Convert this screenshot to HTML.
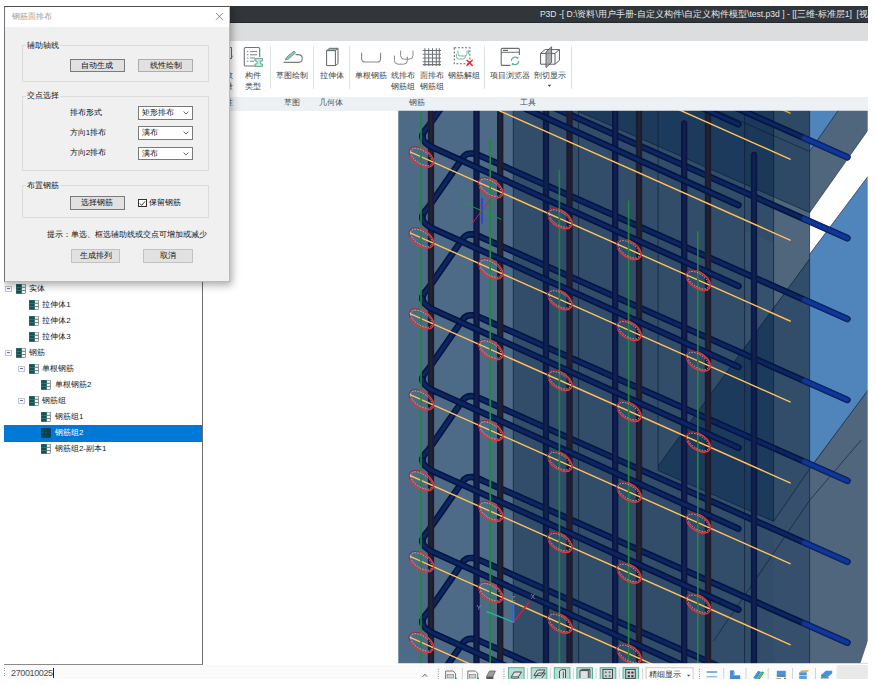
<!DOCTYPE html>
<html lang="zh">
<head>
<meta charset="utf-8">
<title>P3D</title>
<style>
*{box-sizing:border-box;margin:0;padding:0}
html,body{width:876px;height:685px;overflow:hidden;background:#fff}
body{position:relative;font-family:"Liberation Sans",sans-serif;font-size:8px;color:#1a1a1a;line-height:1}
.abs{position:absolute}
#titlebar{left:4px;top:6px;width:864px;height:16.7px;background:#31363a;border-bottom:1px solid #23282c}
#titletext{right:8px;top:10px;color:#e4e6e8;font-size:8.55px;white-space:nowrap;letter-spacing:0}
#tabband{left:4px;top:22.7px;width:864px;height:18px;background:#dcddde}
#ribbon{left:4px;top:40.5px;width:864px;height:56px;background:#fff}
#strip{left:4px;top:96.5px;width:864px;height:14.3px;background:#eef1f3}
.rl{position:absolute;color:#3d454d;font-size:8px;white-space:nowrap;transform:translateX(-50%);text-align:center;line-height:11.4px}
.sl{position:absolute;top:99px;color:#4a535c;font-size:8px;white-space:nowrap;transform:translateX(-50%)}
.sep{position:absolute;top:46px;width:1px;height:43px;background:#dfe2e5}
/* tree */
#tree{left:4px;top:110px;width:199px;height:554.5px;background:#fff;border-right:1.5px solid #6e6e6e;border-bottom:1.5px solid #8a8a8a}
.tr{position:absolute;font-size:8px;color:#1c1c1c;white-space:nowrap;height:16px;line-height:16px}
.ti{position:absolute;width:10px;height:10px}
.ex{position:absolute;width:5px;height:5px;border:0.7px solid #c2c6cc;background:#fbfcff}
.ex:after{content:"";position:absolute;left:0.8px;right:0.8px;top:1.6px;height:0.7px;background:#5a6fb0}
#sel{left:4px;top:425px;width:198px;height:16.5px;background:#0078d7}
/* status */
#status{left:4px;top:664.5px;width:864px;height:21px;background:#fbfbfb}
/* dialog */
#dlg{left:0;top:0;width:225.5px;height:276.3px;background:#f0f0f0;border:1px solid #b9b9b9;border-left-color:#6f7276;border-top-color:#4b4e52;box-shadow:1px 2px 8px 1px rgba(0,0,0,.34)}
#dlgtitle{left:0;top:0;width:100%;height:19.6px;background:#fff}
.grp{position:absolute;border:1px solid #dcdcdc;background:transparent}
.gl{position:absolute;font-size:8px;color:#111;background:#f0f0f0;padding:0 1px;white-space:nowrap}
.btn{position:absolute;height:13.6px;border:1px solid #adadad;background:#e1e1e1;font-size:8px;color:#111;text-align:center;line-height:11.6px;white-space:nowrap}
.btn.def{border-color:#7a7a7a}
.cmb{position:absolute;width:55px;height:13.7px;border:1px solid #7a7a7a;background:#fff;font-size:8px;line-height:11.7px;padding-left:2.4px;white-space:nowrap}
.cmb svg{position:absolute;right:3px;top:4px}
.lbl{position:absolute;font-size:8px;color:#111;white-space:nowrap}
</style>
</head>
<body>
<!-- main window chrome -->
<div id="titlebar" class="abs"></div>
<div id="titletext" class="abs">P3D -[ D:\资料\用户手册-自定义构件\自定义构件模型\test.p3d ] - [[三维-标准层1]&nbsp; [视</div>
<div id="tabband" class="abs"></div>
<div id="ribbon" class="abs"></div>
<div id="strip" class="abs"></div>
<!-- ribbon items -->
<div class="rl" style="left:229.4px;top:70px">数<br>量</div>
<svg class="abs" style="left:226px;top:46px" width="8" height="22" viewBox="0 0 8 22"><path d="M1.5,1.5 h4 v11 h-4 M5.5,9 q2,1.5 -1,4" fill="none" stroke="#6b6f73" stroke-width="1"/></svg>
<svg class="abs" style="left:243px;top:46px" width="22" height="22" viewBox="0 0 22 22"><path d="M13.6,20 H2.6 Q1.3,20 1.3,18.7 V2.8 Q1.3,1.5 2.6,1.5 H15.4 Q16.7,1.5 16.7,2.8 V11" fill="none" stroke="#707478" stroke-width="1.1"/><g stroke="#7d8185" stroke-width="1"><path d="M4,5.6h1.4M7,5.6h7M4,8.8h1.4M7,8.8h7M4,12h1.4M7,12h5M4,15.2h1.4M7,15.2h4"/></g><path d="M12,12.6 h7.4 v2.4 h-1.7 q-1,1.5 0,3 h1.7 v2.4 h-7.4 v-2.4 h1.7 q1,-1.5 0,-3 h-1.7 z" fill="#cfe9df" stroke="#57a98a" stroke-width="1"/></svg>
<div class="rl" style="left:253.3px;top:70px">构件<br>类型</div>
<div class="sep" style="left:270.3px"></div>
<svg class="abs" style="left:281px;top:46px" width="24" height="20" viewBox="0 0 24 20"><path d="M3,16.4 H17.5 Q21.3,16.2 21.3,12.2 Q21,8.6 17,8.6 H15" fill="none" stroke="#777b7f" stroke-width="1.1" stroke-linecap="round"/><path d="M4.4,14 L5.3,11.6 L13,5 L14.6,6.8 L6.9,13.3 Z" fill="#8cc7ae" stroke="#4f9f80" stroke-width=".9" stroke-linejoin="round"/></svg>
<div class="rl" style="left:292.4px;top:70px">草图绘制</div>
<div class="sep" style="left:312.8px"></div>
<svg class="abs" style="left:323px;top:46px" width="18" height="22" viewBox="0 0 18 22"><path d="M3.6,4.6 L6.4,2.3 H15 L12.4,4.6 Z" fill="#86c5ab" stroke="#5f6468" stroke-width=".9" stroke-linejoin="round"/><path d="M3.6,4.6 H12.4 V19.6 H3.6 Z M12.4,4.6 L15,2.3 V17.6 L12.4,19.6" fill="#fff" stroke="#5f6468" stroke-width="1" stroke-linejoin="round"/></svg>
<div class="rl" style="left:332.1px;top:70px">拉伸体</div>
<div class="sep" style="left:349px"></div>
<svg class="abs" style="left:359px;top:46px" width="24" height="20" viewBox="0 0 24 20"><path d="M2.6,7 V12.4 Q2.6,16 6.2,16 H18 Q21.6,16 21.6,12.4 V7" fill="none" stroke="#85898d" stroke-width="1.1" stroke-linecap="round"/></svg>
<div class="rl" style="left:371.2px;top:70px">单根钢筋</div>
<svg class="abs" style="left:392px;top:46px" width="24" height="22" viewBox="0 0 24 22"><g fill="none" stroke="#85898d" stroke-width="1" stroke-linecap="round"><path d="M8.6,5 V9.4 Q8.6,13.2 12.4,13.2 H17.2 Q21,13.2 21,9.4 V5"/><path d="M2.4,10 V14.4 Q2.4,18.2 6.2,18.2 H11.6 Q15.4,18.2 15.4,14.4 V11"/></g></svg>
<div class="rl" style="left:403.4px;top:70px">线排布<br>钢筋组</div>
<svg class="abs" style="left:421px;top:46px" width="22" height="22" viewBox="0 0 22 22"><path d="M1.7,4.4H20M1.7,8.2H20M1.7,12H20M1.7,15.8H20M1.7,18.6H20M3.9,2.2V20M7.7,2.2V20M11.5,2.2V20M15.3,2.2V20M18.3,2.2V20" stroke="#6f7377" stroke-width="1.05" fill="none"/></svg>
<div class="rl" style="left:431.6px;top:70px">面排布<br>钢筋组</div>
<svg class="abs" style="left:452px;top:45px" width="24" height="24" viewBox="0 0 24 24"><rect x="2.3" y="2.8" width="15.6" height="16" fill="none" stroke="#6a6e72" stroke-width="1.1" stroke-dasharray="2 1.6"/><g fill="none" stroke="#73b79c" stroke-width="1" stroke-linecap="round"><path d="M6,6 V8.6 Q6,11 8.4,11 H12.6 Q15,11 15,8.6 V6"/><path d="M4.4,9.4 V11.6 Q4.4,14 6.8,14 H11 Q13.4,14 13.4,11.6"/><path d="M16.6,5.6 V8.6"/></g><path d="M15,15.2 L20.2,20.4 M20.2,15.2 L15,20.4" stroke="#e0303c" stroke-width="1.5" stroke-linecap="round"/></svg>
<div class="rl" style="left:463.5px;top:70px">钢筋解组</div>
<div class="sep" style="left:484.2px"></div>
<svg class="abs" style="left:499px;top:46px" width="24" height="22" viewBox="0 0 24 22"><path d="M11.5,19.4 H3.2 Q2.2,19.4 2.2,18.4 V3.4 Q2.2,2.4 3.2,2.4 H19.4 Q20.4,2.4 20.4,3.4 V9 M2.2,6.3 H20.4 M4,4.4 H9" fill="none" stroke="#6c7074" stroke-width="1.1"/><g fill="none" stroke="#63b092" stroke-width="1.2" stroke-linecap="round"><path d="M12.4,14.4 A3.8,3.8 0 0 1 18.6,12"/><path d="M19.8,15.4 A3.8,3.8 0 0 1 13.6,17.8"/></g><path d="M19.6,10.4 L19.2,12.8 L17,11.9 Z M12.6,19.4 L13,17 L15.2,17.9 Z" fill="#63b092"/></svg>
<div class="rl" style="left:510.3px;top:70px">项目浏览器</div>
<svg class="abs" style="left:538px;top:45px" width="24" height="24" viewBox="0 0 24 24"><g fill="none" stroke="#5c6064" stroke-width="1" stroke-linejoin="round"><path d="M2.6,8.4 L7,4.6 H21.4 V15.4 L17,19.2 H2.6 Z"/><path d="M2.6,8.4 H17 V19.2 M17,8.4 L21.4,4.6"/></g><path d="M8,7 L13.6,1.8 V17.4 L8,22.6 Z" fill="#8e9296" fill-opacity=".75" stroke="#55595d" stroke-width=".9" stroke-linejoin="round"/></svg>
<div class="rl" style="left:550px;top:70px">剖切显示</div>
<svg class="abs" style="left:547px;top:84px" width="5" height="4" viewBox="0 0 5 4"><path d="M0.6,0.8 H4.2 L2.4,3 Z" fill="#444"/></svg>
<div class="sep" style="left:570.7px"></div>
<!-- strip labels -->
<div class="sl" style="left:292.4px">草图</div>
<div class="sl" style="left:331.4px">几何体</div>
<div class="sl" style="left:417px">钢筋</div>
<div class="sl" style="left:527.7px">工具</div>
<div class="sl" style="left:228.5px">性</div>

<svg id="vp" width="876" height="685" viewBox="0 0 876 685" style="position:absolute;left:0;top:0">
<defs><filter id="soft" x="0" y="0" width="876" height="685" filterUnits="userSpaceOnUse"><feGaussianBlur stdDeviation="0.45"/></filter><clipPath id="vc"><rect x="398.3" y="110.8" width="469.40000000000003" height="552.4000000000001"/></clipPath></defs>
<g clip-path="url(#vc)"><g filter="url(#soft)">
<rect x="398" y="110" width="470" height="554" fill="#304d6b"/>
<rect x="398" y="110" width="115.3" height="554" fill="#4e6a86"/>
<polygon points="578.6,110 773.6,110 773.6,196.8 578.6,111.4" fill="#1d3a5c"/>
<polygon points="773.6,110 809.6,110 809.6,212.6 773.6,196.8" fill="#2f4965"/>
<polygon points="744.6,110 773.6,110 773.6,196.8 744.6,184.1" fill="#1c3758"/>
<polygon points="773.6,196.8 809.6,212.6 809.6,259 773.6,307.7" fill="#50667d"/>
<polygon points="773.6,521.4 809.6,469 809.6,664 773.6,664" fill="#35506c"/>
<polygon points="773.6,307.7 658.1,466 658.1,470.4 773.6,521.4" fill="#1d3a5c"/>
<polygon points="744.6,230 773.6,243 773.6,307.7 744.6,347" fill="#36516d"/>
<rect x="809.6" y="110" width="60" height="554" fill="#4f85bb"/>
<polygon points="838.5,110 868,110 868,130 809.6,212.8 809.6,151.4" fill="#50667d"/>
<polygon points="868,130 868,176.3 809.6,254.3 809.6,212.8" fill="#ffffff"/>
<polygon points="868,390 809.6,467.5 809.6,664 868,664" fill="#50667d"/>
<polygon points="868,640.5 860.5,663 868,663" fill="#ffffff"/>
<line x1="513.3" y1="110" x2="513.3" y2="664" stroke="#0d1a2c" stroke-opacity=".7" stroke-width=".9"/>
<line x1="578.6" y1="110" x2="578.6" y2="664" stroke="#0d1a2c" stroke-opacity=".7" stroke-width=".9"/>
<line x1="658.1" y1="110" x2="658.1" y2="470.4" stroke="#0d1a2c" stroke-opacity=".7" stroke-width=".9"/>
<line x1="744.6" y1="110" x2="744.6" y2="664" stroke="#0d1a2c" stroke-opacity=".7" stroke-width=".9"/>
<line x1="773.6" y1="110" x2="773.6" y2="521.4" stroke="#0d1a2c" stroke-opacity=".7" stroke-width=".9"/>
<line x1="809.6" y1="110" x2="809.6" y2="664" stroke="#0d1a2c" stroke-opacity=".7" stroke-width=".9"/>
<path d="M578.6,111.4 L809.6,212.6 M809.6,259 L658.1,466 M658.1,470.4 L773.6,521.4 L809.6,469 L868,390 M861.2,440 L809.6,500.4 L713.5,641 M809.6,151.4 L838.5,110 M809.6,212.8 L868,130 M809.6,254.3 L868,176.3 M717,110.7 L808.8,151.2" stroke="#0d1a2c" stroke-opacity=".7" stroke-width=".85" fill="none"/>
<g fill="none" stroke-linecap="round" stroke-linejoin="round">
<path d="M422.3,-25.30 C422.3,-30.10 426.5,-32.79 428.8,-36.10 L462.2,-84.20 C465.6,-89.09 468.2,-89.50 472.5,-89.20 C475.5,-89.00 479,-87.38 483,-85.61 L847.4,76.33" stroke="#06163e" stroke-width="6.6"/>
<path d="M422.3,-25.30 C422.3,-30.10 426.5,-32.79 428.8,-36.10 L462.2,-84.20 C465.6,-89.09 468.2,-89.50 472.5,-89.20 C475.5,-89.00 479,-87.38 483,-85.61 L847.4,76.33" stroke="#09225a" stroke-width="3.8"/>
<path d="M422.3,-25.30 C422.3,-30.10 426.5,-32.79 428.8,-36.10 L462.2,-84.20 C465.6,-89.09 468.2,-89.50 472.5,-89.20 C475.5,-89.00 479,-87.38 483,-85.61 L847.4,76.33" stroke="#0a2968" stroke-width="1.4"/>
<path d="M804,57.05 L847.4,76.33" stroke="#0a2878" stroke-width="5.8"/>
<path d="M804,57.05 L847.4,76.33" stroke="#0c399c" stroke-width="3.4"/>
<path d="M422.3,55.60 C422.3,50.80 426.5,48.11 428.8,44.80 L462.2,-3.30 C465.6,-8.19 468.2,-8.60 472.5,-8.30 C475.5,-8.10 479,-6.48 483,-4.71 L847.4,157.23" stroke="#06163e" stroke-width="6.6"/>
<path d="M422.3,55.60 C422.3,50.80 426.5,48.11 428.8,44.80 L462.2,-3.30 C465.6,-8.19 468.2,-8.60 472.5,-8.30 C475.5,-8.10 479,-6.48 483,-4.71 L847.4,157.23" stroke="#09225a" stroke-width="3.8"/>
<path d="M422.3,55.60 C422.3,50.80 426.5,48.11 428.8,44.80 L462.2,-3.30 C465.6,-8.19 468.2,-8.60 472.5,-8.30 C475.5,-8.10 479,-6.48 483,-4.71 L847.4,157.23" stroke="#0a2968" stroke-width="1.4"/>
<path d="M804,137.95 L847.4,157.23" stroke="#0a2878" stroke-width="5.8"/>
<path d="M804,137.95 L847.4,157.23" stroke="#0c399c" stroke-width="3.4"/>
<path d="M422.3,136.50 C422.3,131.70 426.5,129.01 428.8,125.70 L462.2,77.60 C465.6,72.71 468.2,72.30 472.5,72.60 C475.5,72.80 479,74.42 483,76.19 L847.4,238.13" stroke="#06163e" stroke-width="6.6"/>
<path d="M422.3,136.50 C422.3,131.70 426.5,129.01 428.8,125.70 L462.2,77.60 C465.6,72.71 468.2,72.30 472.5,72.60 C475.5,72.80 479,74.42 483,76.19 L847.4,238.13" stroke="#09225a" stroke-width="3.8"/>
<path d="M422.3,136.50 C422.3,131.70 426.5,129.01 428.8,125.70 L462.2,77.60 C465.6,72.71 468.2,72.30 472.5,72.60 C475.5,72.80 479,74.42 483,76.19 L847.4,238.13" stroke="#0a2968" stroke-width="1.4"/>
<path d="M804,218.85 L847.4,238.13" stroke="#0a2878" stroke-width="5.8"/>
<path d="M804,218.85 L847.4,238.13" stroke="#0c399c" stroke-width="3.4"/>
<path d="M422.3,217.40 C422.3,212.60 426.5,209.91 428.8,206.60 L462.2,158.50 C465.6,153.61 468.2,153.20 472.5,153.50 C475.5,153.70 479,155.32 483,157.09 L847.4,319.03" stroke="#06163e" stroke-width="6.6"/>
<path d="M422.3,217.40 C422.3,212.60 426.5,209.91 428.8,206.60 L462.2,158.50 C465.6,153.61 468.2,153.20 472.5,153.50 C475.5,153.70 479,155.32 483,157.09 L847.4,319.03" stroke="#09225a" stroke-width="3.8"/>
<path d="M422.3,217.40 C422.3,212.60 426.5,209.91 428.8,206.60 L462.2,158.50 C465.6,153.61 468.2,153.20 472.5,153.50 C475.5,153.70 479,155.32 483,157.09 L847.4,319.03" stroke="#0a2968" stroke-width="1.4"/>
<path d="M804,299.75 L847.4,319.03" stroke="#0a2878" stroke-width="5.8"/>
<path d="M804,299.75 L847.4,319.03" stroke="#0c399c" stroke-width="3.4"/>
<path d="M422.3,298.30 C422.3,293.50 426.5,290.81 428.8,287.50 L462.2,239.40 C465.6,234.51 468.2,234.10 472.5,234.40 C475.5,234.60 479,236.22 483,237.99 L847.4,399.93" stroke="#06163e" stroke-width="6.6"/>
<path d="M422.3,298.30 C422.3,293.50 426.5,290.81 428.8,287.50 L462.2,239.40 C465.6,234.51 468.2,234.10 472.5,234.40 C475.5,234.60 479,236.22 483,237.99 L847.4,399.93" stroke="#09225a" stroke-width="3.8"/>
<path d="M422.3,298.30 C422.3,293.50 426.5,290.81 428.8,287.50 L462.2,239.40 C465.6,234.51 468.2,234.10 472.5,234.40 C475.5,234.60 479,236.22 483,237.99 L847.4,399.93" stroke="#0a2968" stroke-width="1.4"/>
<path d="M804,380.65 L847.4,399.93" stroke="#0a2878" stroke-width="5.8"/>
<path d="M804,380.65 L847.4,399.93" stroke="#0c399c" stroke-width="3.4"/>
<path d="M422.3,379.20 C422.3,374.40 426.5,371.71 428.8,368.40 L462.2,320.30 C465.6,315.41 468.2,315.00 472.5,315.30 C475.5,315.50 479,317.12 483,318.89 L847.4,480.83" stroke="#06163e" stroke-width="6.6"/>
<path d="M422.3,379.20 C422.3,374.40 426.5,371.71 428.8,368.40 L462.2,320.30 C465.6,315.41 468.2,315.00 472.5,315.30 C475.5,315.50 479,317.12 483,318.89 L847.4,480.83" stroke="#09225a" stroke-width="3.8"/>
<path d="M422.3,379.20 C422.3,374.40 426.5,371.71 428.8,368.40 L462.2,320.30 C465.6,315.41 468.2,315.00 472.5,315.30 C475.5,315.50 479,317.12 483,318.89 L847.4,480.83" stroke="#0a2968" stroke-width="1.4"/>
<path d="M804,461.55 L847.4,480.83" stroke="#0a2878" stroke-width="5.8"/>
<path d="M804,461.55 L847.4,480.83" stroke="#0c399c" stroke-width="3.4"/>
<path d="M422.3,460.10 C422.3,455.30 426.5,452.61 428.8,449.30 L462.2,401.20 C465.6,396.31 468.2,395.90 472.5,396.20 C475.5,396.40 479,398.02 483,399.79 L847.4,561.73" stroke="#06163e" stroke-width="6.6"/>
<path d="M422.3,460.10 C422.3,455.30 426.5,452.61 428.8,449.30 L462.2,401.20 C465.6,396.31 468.2,395.90 472.5,396.20 C475.5,396.40 479,398.02 483,399.79 L847.4,561.73" stroke="#09225a" stroke-width="3.8"/>
<path d="M422.3,460.10 C422.3,455.30 426.5,452.61 428.8,449.30 L462.2,401.20 C465.6,396.31 468.2,395.90 472.5,396.20 C475.5,396.40 479,398.02 483,399.79 L847.4,561.73" stroke="#0a2968" stroke-width="1.4"/>
<path d="M804,542.45 L847.4,561.73" stroke="#0a2878" stroke-width="5.8"/>
<path d="M804,542.45 L847.4,561.73" stroke="#0c399c" stroke-width="3.4"/>
<path d="M422.3,541.00 C422.3,536.20 426.5,533.51 428.8,530.20 L462.2,482.10 C465.6,477.21 468.2,476.80 472.5,477.10 C475.5,477.30 479,478.92 483,480.69 L847.4,642.63" stroke="#06163e" stroke-width="6.6"/>
<path d="M422.3,541.00 C422.3,536.20 426.5,533.51 428.8,530.20 L462.2,482.10 C465.6,477.21 468.2,476.80 472.5,477.10 C475.5,477.30 479,478.92 483,480.69 L847.4,642.63" stroke="#09225a" stroke-width="3.8"/>
<path d="M422.3,541.00 C422.3,536.20 426.5,533.51 428.8,530.20 L462.2,482.10 C465.6,477.21 468.2,476.80 472.5,477.10 C475.5,477.30 479,478.92 483,480.69 L847.4,642.63" stroke="#0a2968" stroke-width="1.4"/>
<path d="M804,623.35 L847.4,642.63" stroke="#0a2878" stroke-width="5.8"/>
<path d="M804,623.35 L847.4,642.63" stroke="#0c399c" stroke-width="3.4"/>
<path d="M422.3,621.90 C422.3,617.10 426.5,614.41 428.8,611.10 L462.2,563.00 C465.6,558.11 468.2,557.70 472.5,558.00 C475.5,558.20 479,559.82 483,561.59 L847.4,723.53" stroke="#06163e" stroke-width="6.6"/>
<path d="M422.3,621.90 C422.3,617.10 426.5,614.41 428.8,611.10 L462.2,563.00 C465.6,558.11 468.2,557.70 472.5,558.00 C475.5,558.20 479,559.82 483,561.59 L847.4,723.53" stroke="#09225a" stroke-width="3.8"/>
<path d="M422.3,621.90 C422.3,617.10 426.5,614.41 428.8,611.10 L462.2,563.00 C465.6,558.11 468.2,557.70 472.5,558.00 C475.5,558.20 479,559.82 483,561.59 L847.4,723.53" stroke="#0a2968" stroke-width="1.4"/>
<path d="M804,704.25 L847.4,723.53" stroke="#0a2878" stroke-width="5.8"/>
<path d="M804,704.25 L847.4,723.53" stroke="#0c399c" stroke-width="3.4"/>
<path d="M422.3,702.80 C422.3,698.00 426.5,695.31 428.8,692.00 L462.2,643.90 C465.6,639.01 468.2,638.60 472.5,638.90 C475.5,639.10 479,640.72 483,642.49 L847.4,804.43" stroke="#06163e" stroke-width="6.6"/>
<path d="M422.3,702.80 C422.3,698.00 426.5,695.31 428.8,692.00 L462.2,643.90 C465.6,639.01 468.2,638.60 472.5,638.90 C475.5,639.10 479,640.72 483,642.49 L847.4,804.43" stroke="#09225a" stroke-width="3.8"/>
<path d="M422.3,702.80 C422.3,698.00 426.5,695.31 428.8,692.00 L462.2,643.90 C465.6,639.01 468.2,638.60 472.5,638.90 C475.5,639.10 479,640.72 483,642.49 L847.4,804.43" stroke="#0a2968" stroke-width="1.4"/>
<path d="M804,785.15 L847.4,804.43" stroke="#0a2878" stroke-width="5.8"/>
<path d="M804,785.15 L847.4,804.43" stroke="#0c399c" stroke-width="3.4"/>
<path d="M422.3,783.70 C422.3,778.90 426.5,776.21 428.8,772.90 L462.2,724.80 C465.6,719.91 468.2,719.50 472.5,719.80 C475.5,720.00 479,721.62 483,723.39 L847.4,885.33" stroke="#06163e" stroke-width="6.6"/>
<path d="M422.3,783.70 C422.3,778.90 426.5,776.21 428.8,772.90 L462.2,724.80 C465.6,719.91 468.2,719.50 472.5,719.80 C475.5,720.00 479,721.62 483,723.39 L847.4,885.33" stroke="#09225a" stroke-width="3.8"/>
<path d="M422.3,783.70 C422.3,778.90 426.5,776.21 428.8,772.90 L462.2,724.80 C465.6,719.91 468.2,719.50 472.5,719.80 C475.5,720.00 479,721.62 483,723.39 L847.4,885.33" stroke="#0a2968" stroke-width="1.4"/>
<path d="M804,866.05 L847.4,885.33" stroke="#0a2878" stroke-width="5.8"/>
<path d="M804,866.05 L847.4,885.33" stroke="#0c399c" stroke-width="3.4"/>
</g>
<line x1="476.5" y1="100" x2="476.5" y2="670" stroke="#07173f" stroke-width="6.3" stroke-linecap="butt"/>
<line x1="476.5" y1="100" x2="476.5" y2="670" stroke="#0a2052" stroke-width="2.835" stroke-linecap="butt"/>
<line x1="546.0" y1="100" x2="546.0" y2="670" stroke="#07173f" stroke-width="6.3" stroke-linecap="butt"/>
<line x1="546.0" y1="100" x2="546.0" y2="670" stroke="#0a2052" stroke-width="2.835" stroke-linecap="butt"/>
<line x1="615.2" y1="100" x2="615.2" y2="670" stroke="#07173f" stroke-width="6.3" stroke-linecap="butt"/>
<line x1="615.2" y1="100" x2="615.2" y2="670" stroke="#0a2052" stroke-width="2.835" stroke-linecap="butt"/>
<line x1="684.2" y1="123.4" x2="684.2" y2="670" stroke="#07173f" stroke-width="6.3" stroke-linecap="round"/>
<line x1="684.2" y1="123.4" x2="684.2" y2="670" stroke="#0a2052" stroke-width="2.835" stroke-linecap="round"/>
<line x1="754.0" y1="155.0" x2="754.0" y2="670" stroke="#07173f" stroke-width="6.3" stroke-linecap="round"/>
<line x1="754.0" y1="155.0" x2="754.0" y2="670" stroke="#0a2052" stroke-width="2.835" stroke-linecap="round"/>
<line x1="431.0" y1="100" x2="431.0" y2="670" stroke="#1b1b2d" stroke-width="6.3"/>
<line x1="431.0" y1="100" x2="431.0" y2="670" stroke="#222236" stroke-width="2.4"/>
<line x1="500.2" y1="100" x2="500.2" y2="670" stroke="#1b1b2d" stroke-width="6.3"/>
<line x1="500.2" y1="100" x2="500.2" y2="670" stroke="#222236" stroke-width="2.4"/>
<line x1="569.5" y1="100" x2="569.5" y2="670" stroke="#1b1b2d" stroke-width="6.3"/>
<line x1="569.5" y1="100" x2="569.5" y2="670" stroke="#222236" stroke-width="2.4"/>
<line x1="639.0" y1="100" x2="639.0" y2="670" stroke="#1b1b2d" stroke-width="6.3"/>
<line x1="639.0" y1="100" x2="639.0" y2="670" stroke="#222236" stroke-width="2.4"/>
<line x1="708.0" y1="100" x2="708.0" y2="670" stroke="#1b1b2d" stroke-width="6.3"/>
<line x1="708.0" y1="100" x2="708.0" y2="670" stroke="#222236" stroke-width="2.4"/>
<g fill="none" stroke-linecap="round" stroke-linejoin="round">
<path d="M738.4,124.23 L435.0,-13.21 C429.5,-15.70 422.3,-19.50 422.3,-25.30" stroke="#06163e" stroke-width="6.6"/>
<path d="M738.4,124.23 L435.0,-13.21 C429.5,-15.70 422.3,-19.50 422.3,-25.30" stroke="#09225a" stroke-width="3.8"/>
<path d="M738.4,124.23 L435.0,-13.21 C429.5,-15.70 422.3,-19.50 422.3,-25.30" stroke="#0a2968" stroke-width="1.4"/>
<path d="M738.4,205.13 L435.0,67.69 C429.5,65.20 422.3,61.40 422.3,55.60" stroke="#06163e" stroke-width="6.6"/>
<path d="M738.4,205.13 L435.0,67.69 C429.5,65.20 422.3,61.40 422.3,55.60" stroke="#09225a" stroke-width="3.8"/>
<path d="M738.4,205.13 L435.0,67.69 C429.5,65.20 422.3,61.40 422.3,55.60" stroke="#0a2968" stroke-width="1.4"/>
<path d="M738.4,286.03 L435.0,148.59 C429.5,146.10 422.3,142.30 422.3,136.50" stroke="#06163e" stroke-width="6.6"/>
<path d="M738.4,286.03 L435.0,148.59 C429.5,146.10 422.3,142.30 422.3,136.50" stroke="#09225a" stroke-width="3.8"/>
<path d="M738.4,286.03 L435.0,148.59 C429.5,146.10 422.3,142.30 422.3,136.50" stroke="#0a2968" stroke-width="1.4"/>
<path d="M738.4,366.93 L435.0,229.49 C429.5,227.00 422.3,223.20 422.3,217.40" stroke="#06163e" stroke-width="6.6"/>
<path d="M738.4,366.93 L435.0,229.49 C429.5,227.00 422.3,223.20 422.3,217.40" stroke="#09225a" stroke-width="3.8"/>
<path d="M738.4,366.93 L435.0,229.49 C429.5,227.00 422.3,223.20 422.3,217.40" stroke="#0a2968" stroke-width="1.4"/>
<path d="M738.4,447.83 L435.0,310.39 C429.5,307.90 422.3,304.10 422.3,298.30" stroke="#06163e" stroke-width="6.6"/>
<path d="M738.4,447.83 L435.0,310.39 C429.5,307.90 422.3,304.10 422.3,298.30" stroke="#09225a" stroke-width="3.8"/>
<path d="M738.4,447.83 L435.0,310.39 C429.5,307.90 422.3,304.10 422.3,298.30" stroke="#0a2968" stroke-width="1.4"/>
<path d="M738.4,528.73 L435.0,391.29 C429.5,388.80 422.3,385.00 422.3,379.20" stroke="#06163e" stroke-width="6.6"/>
<path d="M738.4,528.73 L435.0,391.29 C429.5,388.80 422.3,385.00 422.3,379.20" stroke="#09225a" stroke-width="3.8"/>
<path d="M738.4,528.73 L435.0,391.29 C429.5,388.80 422.3,385.00 422.3,379.20" stroke="#0a2968" stroke-width="1.4"/>
<path d="M738.4,609.63 L435.0,472.19 C429.5,469.70 422.3,465.90 422.3,460.10" stroke="#06163e" stroke-width="6.6"/>
<path d="M738.4,609.63 L435.0,472.19 C429.5,469.70 422.3,465.90 422.3,460.10" stroke="#09225a" stroke-width="3.8"/>
<path d="M738.4,609.63 L435.0,472.19 C429.5,469.70 422.3,465.90 422.3,460.10" stroke="#0a2968" stroke-width="1.4"/>
<path d="M738.4,690.53 L435.0,553.09 C429.5,550.60 422.3,546.80 422.3,541.00" stroke="#06163e" stroke-width="6.6"/>
<path d="M738.4,690.53 L435.0,553.09 C429.5,550.60 422.3,546.80 422.3,541.00" stroke="#09225a" stroke-width="3.8"/>
<path d="M738.4,690.53 L435.0,553.09 C429.5,550.60 422.3,546.80 422.3,541.00" stroke="#0a2968" stroke-width="1.4"/>
<path d="M738.4,771.43 L435.0,633.99 C429.5,631.50 422.3,627.70 422.3,621.90" stroke="#06163e" stroke-width="6.6"/>
<path d="M738.4,771.43 L435.0,633.99 C429.5,631.50 422.3,627.70 422.3,621.90" stroke="#09225a" stroke-width="3.8"/>
<path d="M738.4,771.43 L435.0,633.99 C429.5,631.50 422.3,627.70 422.3,621.90" stroke="#0a2968" stroke-width="1.4"/>
<path d="M738.4,852.33 L435.0,714.89 C429.5,712.40 422.3,708.60 422.3,702.80" stroke="#06163e" stroke-width="6.6"/>
<path d="M738.4,852.33 L435.0,714.89 C429.5,712.40 422.3,708.60 422.3,702.80" stroke="#09225a" stroke-width="3.8"/>
<path d="M738.4,852.33 L435.0,714.89 C429.5,712.40 422.3,708.60 422.3,702.80" stroke="#0a2968" stroke-width="1.4"/>
<path d="M738.4,933.23 L435.0,795.79 C429.5,793.30 422.3,789.50 422.3,783.70" stroke="#06163e" stroke-width="6.6"/>
<path d="M738.4,933.23 L435.0,795.79 C429.5,793.30 422.3,789.50 422.3,783.70" stroke="#09225a" stroke-width="3.8"/>
<path d="M738.4,933.23 L435.0,795.79 C429.5,793.30 422.3,789.50 422.3,783.70" stroke="#0a2968" stroke-width="1.4"/>
</g>
<line x1="409.5" y1="-91.05" x2="790.6" y2="78.54" stroke="#eea53a" stroke-width="1.45"/>
<line x1="409.5" y1="-91.05" x2="790.6" y2="78.54" stroke="#ffdc98" stroke-width=".6"/>
<line x1="409.5" y1="-10.15" x2="790.6" y2="159.44" stroke="#eea53a" stroke-width="1.45"/>
<line x1="409.5" y1="-10.15" x2="790.6" y2="159.44" stroke="#ffdc98" stroke-width=".6"/>
<line x1="409.5" y1="70.75" x2="790.6" y2="240.34" stroke="#eea53a" stroke-width="1.45"/>
<line x1="409.5" y1="70.75" x2="790.6" y2="240.34" stroke="#ffdc98" stroke-width=".6"/>
<line x1="409.5" y1="151.65" x2="790.6" y2="321.24" stroke="#eea53a" stroke-width="1.45"/>
<line x1="409.5" y1="151.65" x2="790.6" y2="321.24" stroke="#ffdc98" stroke-width=".6"/>
<line x1="409.5" y1="232.55" x2="790.6" y2="402.14" stroke="#eea53a" stroke-width="1.45"/>
<line x1="409.5" y1="232.55" x2="790.6" y2="402.14" stroke="#ffdc98" stroke-width=".6"/>
<line x1="409.5" y1="313.45" x2="790.6" y2="483.04" stroke="#eea53a" stroke-width="1.45"/>
<line x1="409.5" y1="313.45" x2="790.6" y2="483.04" stroke="#ffdc98" stroke-width=".6"/>
<line x1="409.5" y1="394.35" x2="790.6" y2="563.94" stroke="#eea53a" stroke-width="1.45"/>
<line x1="409.5" y1="394.35" x2="790.6" y2="563.94" stroke="#ffdc98" stroke-width=".6"/>
<line x1="409.5" y1="475.25" x2="790.6" y2="644.84" stroke="#eea53a" stroke-width="1.45"/>
<line x1="409.5" y1="475.25" x2="790.6" y2="644.84" stroke="#ffdc98" stroke-width=".6"/>
<line x1="409.5" y1="556.15" x2="790.6" y2="725.74" stroke="#eea53a" stroke-width="1.45"/>
<line x1="409.5" y1="556.15" x2="790.6" y2="725.74" stroke="#ffdc98" stroke-width=".6"/>
<line x1="409.5" y1="637.05" x2="790.6" y2="806.64" stroke="#eea53a" stroke-width="1.45"/>
<line x1="409.5" y1="637.05" x2="790.6" y2="806.64" stroke="#ffdc98" stroke-width=".6"/>
<line x1="409.5" y1="717.95" x2="790.6" y2="887.54" stroke="#eea53a" stroke-width="1.45"/>
<line x1="409.5" y1="717.95" x2="790.6" y2="887.54" stroke="#ffdc98" stroke-width=".6"/>
<line x1="770" y1="104.23" x2="790.6" y2="113.4" stroke="#eea53a" stroke-width="1.45"/>
<line x1="461.9" y1="202" x2="501.4" y2="219.4" stroke="#1f9a3c" stroke-width="1"/>
<line x1="482" y1="198" x2="482" y2="223.5" stroke="#2a3fe0" stroke-width="1.6"/>
<line x1="470.7" y1="225.6" x2="491.1" y2="198" stroke="#c0283c" stroke-width="1"/>
<line x1="421.0" y1="100.0" x2="421.0" y2="670" stroke="#1f8a38" stroke-width="1.6"/>
<line x1="490.2" y1="138.8" x2="490.2" y2="670" stroke="#1f8a38" stroke-width="1.6"/>
<line x1="559.4" y1="169.6" x2="559.4" y2="670" stroke="#1f8a38" stroke-width="1.6"/>
<line x1="628.6" y1="200.4" x2="628.6" y2="670" stroke="#1f8a38" stroke-width="1.6"/>
<line x1="697.8" y1="231.2" x2="697.8" y2="670" stroke="#1f8a38" stroke-width="1.6"/>
<g transform="translate(421.3,156.9) rotate(34.5)" fill="none"><ellipse rx="13.9" ry="7.8" stroke="#a8242f" stroke-width=".9"/><path d="M-6,-7.05 A13.9,7.8 0 0 1 13.9,0 A13.9,7.8 0 0 1 -9,5.95" stroke="#e2363c" stroke-width="1.5" stroke-linecap="round"/><ellipse rx="12.3" ry="6.3" stroke="#f6d2d2" stroke-width=".6" stroke-dasharray="1.5 1.3"/></g>
<g transform="translate(421.3,237.8) rotate(34.5)" fill="none"><ellipse rx="13.9" ry="7.8" stroke="#a8242f" stroke-width=".9"/><path d="M-6,-7.05 A13.9,7.8 0 0 1 13.9,0 A13.9,7.8 0 0 1 -9,5.95" stroke="#e2363c" stroke-width="1.5" stroke-linecap="round"/><ellipse rx="12.3" ry="6.3" stroke="#f6d2d2" stroke-width=".6" stroke-dasharray="1.5 1.3"/></g>
<g transform="translate(421.3,318.7) rotate(34.5)" fill="none"><ellipse rx="13.9" ry="7.8" stroke="#a8242f" stroke-width=".9"/><path d="M-6,-7.05 A13.9,7.8 0 0 1 13.9,0 A13.9,7.8 0 0 1 -9,5.95" stroke="#e2363c" stroke-width="1.5" stroke-linecap="round"/><ellipse rx="12.3" ry="6.3" stroke="#f6d2d2" stroke-width=".6" stroke-dasharray="1.5 1.3"/></g>
<g transform="translate(421.3,399.6) rotate(34.5)" fill="none"><ellipse rx="13.9" ry="7.8" stroke="#a8242f" stroke-width=".9"/><path d="M-6,-7.05 A13.9,7.8 0 0 1 13.9,0 A13.9,7.8 0 0 1 -9,5.95" stroke="#e2363c" stroke-width="1.5" stroke-linecap="round"/><ellipse rx="12.3" ry="6.3" stroke="#f6d2d2" stroke-width=".6" stroke-dasharray="1.5 1.3"/></g>
<g transform="translate(421.3,480.5) rotate(34.5)" fill="none"><ellipse rx="13.9" ry="7.8" stroke="#a8242f" stroke-width=".9"/><path d="M-6,-7.05 A13.9,7.8 0 0 1 13.9,0 A13.9,7.8 0 0 1 -9,5.95" stroke="#e2363c" stroke-width="1.5" stroke-linecap="round"/><ellipse rx="12.3" ry="6.3" stroke="#f6d2d2" stroke-width=".6" stroke-dasharray="1.5 1.3"/></g>
<g transform="translate(421.3,561.4) rotate(34.5)" fill="none"><ellipse rx="13.9" ry="7.8" stroke="#a8242f" stroke-width=".9"/><path d="M-6,-7.05 A13.9,7.8 0 0 1 13.9,0 A13.9,7.8 0 0 1 -9,5.95" stroke="#e2363c" stroke-width="1.5" stroke-linecap="round"/><ellipse rx="12.3" ry="6.3" stroke="#f6d2d2" stroke-width=".6" stroke-dasharray="1.5 1.3"/></g>
<g transform="translate(421.3,642.3) rotate(34.5)" fill="none"><ellipse rx="13.9" ry="7.8" stroke="#a8242f" stroke-width=".9"/><path d="M-6,-7.05 A13.9,7.8 0 0 1 13.9,0 A13.9,7.8 0 0 1 -9,5.95" stroke="#e2363c" stroke-width="1.5" stroke-linecap="round"/><ellipse rx="12.3" ry="6.3" stroke="#f6d2d2" stroke-width=".6" stroke-dasharray="1.5 1.3"/></g>
<g transform="translate(490.5,187.7) rotate(34.5)" fill="none"><ellipse rx="13.9" ry="7.8" stroke="#a8242f" stroke-width=".9"/><path d="M-6,-7.05 A13.9,7.8 0 0 1 13.9,0 A13.9,7.8 0 0 1 -9,5.95" stroke="#e2363c" stroke-width="1.5" stroke-linecap="round"/><ellipse rx="12.3" ry="6.3" stroke="#f6d2d2" stroke-width=".6" stroke-dasharray="1.5 1.3"/></g>
<g transform="translate(490.5,268.6) rotate(34.5)" fill="none"><ellipse rx="13.9" ry="7.8" stroke="#a8242f" stroke-width=".9"/><path d="M-6,-7.05 A13.9,7.8 0 0 1 13.9,0 A13.9,7.8 0 0 1 -9,5.95" stroke="#e2363c" stroke-width="1.5" stroke-linecap="round"/><ellipse rx="12.3" ry="6.3" stroke="#f6d2d2" stroke-width=".6" stroke-dasharray="1.5 1.3"/></g>
<g transform="translate(490.5,349.5) rotate(34.5)" fill="none"><ellipse rx="13.9" ry="7.8" stroke="#a8242f" stroke-width=".9"/><path d="M-6,-7.05 A13.9,7.8 0 0 1 13.9,0 A13.9,7.8 0 0 1 -9,5.95" stroke="#e2363c" stroke-width="1.5" stroke-linecap="round"/><ellipse rx="12.3" ry="6.3" stroke="#f6d2d2" stroke-width=".6" stroke-dasharray="1.5 1.3"/></g>
<g transform="translate(490.5,430.4) rotate(34.5)" fill="none"><ellipse rx="13.9" ry="7.8" stroke="#a8242f" stroke-width=".9"/><path d="M-6,-7.05 A13.9,7.8 0 0 1 13.9,0 A13.9,7.8 0 0 1 -9,5.95" stroke="#e2363c" stroke-width="1.5" stroke-linecap="round"/><ellipse rx="12.3" ry="6.3" stroke="#f6d2d2" stroke-width=".6" stroke-dasharray="1.5 1.3"/></g>
<g transform="translate(490.5,511.3) rotate(34.5)" fill="none"><ellipse rx="13.9" ry="7.8" stroke="#a8242f" stroke-width=".9"/><path d="M-6,-7.05 A13.9,7.8 0 0 1 13.9,0 A13.9,7.8 0 0 1 -9,5.95" stroke="#e2363c" stroke-width="1.5" stroke-linecap="round"/><ellipse rx="12.3" ry="6.3" stroke="#f6d2d2" stroke-width=".6" stroke-dasharray="1.5 1.3"/></g>
<g transform="translate(490.5,592.2) rotate(34.5)" fill="none"><ellipse rx="13.9" ry="7.8" stroke="#a8242f" stroke-width=".9"/><path d="M-6,-7.05 A13.9,7.8 0 0 1 13.9,0 A13.9,7.8 0 0 1 -9,5.95" stroke="#e2363c" stroke-width="1.5" stroke-linecap="round"/><ellipse rx="12.3" ry="6.3" stroke="#f6d2d2" stroke-width=".6" stroke-dasharray="1.5 1.3"/></g>
<g transform="translate(490.5,673.1) rotate(34.5)" fill="none"><ellipse rx="13.9" ry="7.8" stroke="#a8242f" stroke-width=".9"/><path d="M-6,-7.05 A13.9,7.8 0 0 1 13.9,0 A13.9,7.8 0 0 1 -9,5.95" stroke="#e2363c" stroke-width="1.5" stroke-linecap="round"/><ellipse rx="12.3" ry="6.3" stroke="#f6d2d2" stroke-width=".6" stroke-dasharray="1.5 1.3"/></g>
<g transform="translate(559.7,218.5) rotate(34.5)" fill="none"><ellipse rx="13.9" ry="7.8" stroke="#a8242f" stroke-width=".9"/><path d="M-6,-7.05 A13.9,7.8 0 0 1 13.9,0 A13.9,7.8 0 0 1 -9,5.95" stroke="#e2363c" stroke-width="1.5" stroke-linecap="round"/><ellipse rx="12.3" ry="6.3" stroke="#f6d2d2" stroke-width=".6" stroke-dasharray="1.5 1.3"/></g>
<g transform="translate(559.7,299.4) rotate(34.5)" fill="none"><ellipse rx="13.9" ry="7.8" stroke="#a8242f" stroke-width=".9"/><path d="M-6,-7.05 A13.9,7.8 0 0 1 13.9,0 A13.9,7.8 0 0 1 -9,5.95" stroke="#e2363c" stroke-width="1.5" stroke-linecap="round"/><ellipse rx="12.3" ry="6.3" stroke="#f6d2d2" stroke-width=".6" stroke-dasharray="1.5 1.3"/></g>
<g transform="translate(559.7,380.3) rotate(34.5)" fill="none"><ellipse rx="13.9" ry="7.8" stroke="#a8242f" stroke-width=".9"/><path d="M-6,-7.05 A13.9,7.8 0 0 1 13.9,0 A13.9,7.8 0 0 1 -9,5.95" stroke="#e2363c" stroke-width="1.5" stroke-linecap="round"/><ellipse rx="12.3" ry="6.3" stroke="#f6d2d2" stroke-width=".6" stroke-dasharray="1.5 1.3"/></g>
<g transform="translate(559.7,461.2) rotate(34.5)" fill="none"><ellipse rx="13.9" ry="7.8" stroke="#a8242f" stroke-width=".9"/><path d="M-6,-7.05 A13.9,7.8 0 0 1 13.9,0 A13.9,7.8 0 0 1 -9,5.95" stroke="#e2363c" stroke-width="1.5" stroke-linecap="round"/><ellipse rx="12.3" ry="6.3" stroke="#f6d2d2" stroke-width=".6" stroke-dasharray="1.5 1.3"/></g>
<g transform="translate(559.7,542.1) rotate(34.5)" fill="none"><ellipse rx="13.9" ry="7.8" stroke="#a8242f" stroke-width=".9"/><path d="M-6,-7.05 A13.9,7.8 0 0 1 13.9,0 A13.9,7.8 0 0 1 -9,5.95" stroke="#e2363c" stroke-width="1.5" stroke-linecap="round"/><ellipse rx="12.3" ry="6.3" stroke="#f6d2d2" stroke-width=".6" stroke-dasharray="1.5 1.3"/></g>
<g transform="translate(559.7,623.0) rotate(34.5)" fill="none"><ellipse rx="13.9" ry="7.8" stroke="#a8242f" stroke-width=".9"/><path d="M-6,-7.05 A13.9,7.8 0 0 1 13.9,0 A13.9,7.8 0 0 1 -9,5.95" stroke="#e2363c" stroke-width="1.5" stroke-linecap="round"/><ellipse rx="12.3" ry="6.3" stroke="#f6d2d2" stroke-width=".6" stroke-dasharray="1.5 1.3"/></g>
<g transform="translate(628.9,249.3) rotate(34.5)" fill="none"><ellipse rx="13.9" ry="7.8" stroke="#a8242f" stroke-width=".9"/><path d="M-6,-7.05 A13.9,7.8 0 0 1 13.9,0 A13.9,7.8 0 0 1 -9,5.95" stroke="#e2363c" stroke-width="1.5" stroke-linecap="round"/><ellipse rx="12.3" ry="6.3" stroke="#f6d2d2" stroke-width=".6" stroke-dasharray="1.5 1.3"/></g>
<g transform="translate(628.9,330.2) rotate(34.5)" fill="none"><ellipse rx="13.9" ry="7.8" stroke="#a8242f" stroke-width=".9"/><path d="M-6,-7.05 A13.9,7.8 0 0 1 13.9,0 A13.9,7.8 0 0 1 -9,5.95" stroke="#e2363c" stroke-width="1.5" stroke-linecap="round"/><ellipse rx="12.3" ry="6.3" stroke="#f6d2d2" stroke-width=".6" stroke-dasharray="1.5 1.3"/></g>
<g transform="translate(628.9,411.1) rotate(34.5)" fill="none"><ellipse rx="13.9" ry="7.8" stroke="#a8242f" stroke-width=".9"/><path d="M-6,-7.05 A13.9,7.8 0 0 1 13.9,0 A13.9,7.8 0 0 1 -9,5.95" stroke="#e2363c" stroke-width="1.5" stroke-linecap="round"/><ellipse rx="12.3" ry="6.3" stroke="#f6d2d2" stroke-width=".6" stroke-dasharray="1.5 1.3"/></g>
<g transform="translate(628.9,492.0) rotate(34.5)" fill="none"><ellipse rx="13.9" ry="7.8" stroke="#a8242f" stroke-width=".9"/><path d="M-6,-7.05 A13.9,7.8 0 0 1 13.9,0 A13.9,7.8 0 0 1 -9,5.95" stroke="#e2363c" stroke-width="1.5" stroke-linecap="round"/><ellipse rx="12.3" ry="6.3" stroke="#f6d2d2" stroke-width=".6" stroke-dasharray="1.5 1.3"/></g>
<g transform="translate(628.9,572.9) rotate(34.5)" fill="none"><ellipse rx="13.9" ry="7.8" stroke="#a8242f" stroke-width=".9"/><path d="M-6,-7.05 A13.9,7.8 0 0 1 13.9,0 A13.9,7.8 0 0 1 -9,5.95" stroke="#e2363c" stroke-width="1.5" stroke-linecap="round"/><ellipse rx="12.3" ry="6.3" stroke="#f6d2d2" stroke-width=".6" stroke-dasharray="1.5 1.3"/></g>
<g transform="translate(628.9,653.8) rotate(34.5)" fill="none"><ellipse rx="13.9" ry="7.8" stroke="#a8242f" stroke-width=".9"/><path d="M-6,-7.05 A13.9,7.8 0 0 1 13.9,0 A13.9,7.8 0 0 1 -9,5.95" stroke="#e2363c" stroke-width="1.5" stroke-linecap="round"/><ellipse rx="12.3" ry="6.3" stroke="#f6d2d2" stroke-width=".6" stroke-dasharray="1.5 1.3"/></g>
<g transform="translate(698.1,280.1) rotate(34.5)" fill="none"><ellipse rx="13.9" ry="7.8" stroke="#a8242f" stroke-width=".9"/><path d="M-6,-7.05 A13.9,7.8 0 0 1 13.9,0 A13.9,7.8 0 0 1 -9,5.95" stroke="#e2363c" stroke-width="1.5" stroke-linecap="round"/><ellipse rx="12.3" ry="6.3" stroke="#f6d2d2" stroke-width=".6" stroke-dasharray="1.5 1.3"/></g>
<g transform="translate(698.1,361.0) rotate(34.5)" fill="none"><ellipse rx="13.9" ry="7.8" stroke="#a8242f" stroke-width=".9"/><path d="M-6,-7.05 A13.9,7.8 0 0 1 13.9,0 A13.9,7.8 0 0 1 -9,5.95" stroke="#e2363c" stroke-width="1.5" stroke-linecap="round"/><ellipse rx="12.3" ry="6.3" stroke="#f6d2d2" stroke-width=".6" stroke-dasharray="1.5 1.3"/></g>
<g transform="translate(698.1,441.9) rotate(34.5)" fill="none"><ellipse rx="13.9" ry="7.8" stroke="#a8242f" stroke-width=".9"/><path d="M-6,-7.05 A13.9,7.8 0 0 1 13.9,0 A13.9,7.8 0 0 1 -9,5.95" stroke="#e2363c" stroke-width="1.5" stroke-linecap="round"/><ellipse rx="12.3" ry="6.3" stroke="#f6d2d2" stroke-width=".6" stroke-dasharray="1.5 1.3"/></g>
<g transform="translate(698.1,522.8) rotate(34.5)" fill="none"><ellipse rx="13.9" ry="7.8" stroke="#a8242f" stroke-width=".9"/><path d="M-6,-7.05 A13.9,7.8 0 0 1 13.9,0 A13.9,7.8 0 0 1 -9,5.95" stroke="#e2363c" stroke-width="1.5" stroke-linecap="round"/><ellipse rx="12.3" ry="6.3" stroke="#f6d2d2" stroke-width=".6" stroke-dasharray="1.5 1.3"/></g>
<g transform="translate(698.1,603.7) rotate(34.5)" fill="none"><ellipse rx="13.9" ry="7.8" stroke="#a8242f" stroke-width=".9"/><path d="M-6,-7.05 A13.9,7.8 0 0 1 13.9,0 A13.9,7.8 0 0 1 -9,5.95" stroke="#e2363c" stroke-width="1.5" stroke-linecap="round"/><ellipse rx="12.3" ry="6.3" stroke="#f6d2d2" stroke-width=".6" stroke-dasharray="1.5 1.3"/></g>
<g transform="translate(698.1,684.6) rotate(34.5)" fill="none"><ellipse rx="13.9" ry="7.8" stroke="#a8242f" stroke-width=".9"/><path d="M-6,-7.05 A13.9,7.8 0 0 1 13.9,0 A13.9,7.8 0 0 1 -9,5.95" stroke="#e2363c" stroke-width="1.5" stroke-linecap="round"/><ellipse rx="12.3" ry="6.3" stroke="#f6d2d2" stroke-width=".6" stroke-dasharray="1.5 1.3"/></g>
<g stroke-linecap="round"><line x1="513.5" y1="622.2" x2="487" y2="611.6" stroke="#20b8a0" stroke-width="1.4"/><line x1="513.5" y1="622.2" x2="528.7" y2="602.5" stroke="#d42030" stroke-width="1.5"/><line x1="513.5" y1="622.2" x2="513.5" y2="604.3" stroke="#2a6ff0" stroke-width="1.8"/></g>
<g font-family="Liberation Sans, sans-serif" font-size="7" fill="#8f9499"><text x="511" y="600.5">Z</text><text x="530.5" y="598.5">X</text><text x="476.5" y="610">Y</text></g>
</g></g></svg>
<div id="tree" class="abs"></div>
<div id="sel" class="abs"></div>
<div class="ex" style="left:5.3px;top:285.6px;width:6.4px;height:6.4px"></div>
<svg class="abs" style="left:15.9px;top:283.8px" width="10" height="10" viewBox="0 0 10 10"><rect x="0.2" y="0.2" width="9.4" height="2.9" fill="#f4f6f6" stroke="#4a5054" stroke-width=".55"/><rect x="0.2" y="0.2" width="5.6" height="2.9" fill="#0a5656"/><rect x="0.2" y="3.45" width="9.4" height="2.9" fill="#f4f6f6" stroke="#4a5054" stroke-width=".55"/><rect x="0.2" y="3.45" width="5.6" height="2.9" fill="#0a5656"/><rect x="0.2" y="6.7" width="9.4" height="2.9" fill="#f4f6f6" stroke="#4a5054" stroke-width=".55"/><rect x="0.2" y="6.7" width="5.6" height="2.9" fill="#0a5656"/></svg>
<div class="tr" style="left:28.9px;top:281px;">实体</div>
<svg class="abs" style="left:28.5px;top:299.8px" width="10" height="10" viewBox="0 0 10 10"><rect x="0.2" y="0.2" width="9.4" height="2.9" fill="#f4f6f6" stroke="#4a5054" stroke-width=".55"/><rect x="0.2" y="0.2" width="5.6" height="2.9" fill="#0a5656"/><rect x="0.2" y="3.45" width="9.4" height="2.9" fill="#f4f6f6" stroke="#4a5054" stroke-width=".55"/><rect x="0.2" y="3.45" width="5.6" height="2.9" fill="#0a5656"/><rect x="0.2" y="6.7" width="9.4" height="2.9" fill="#f4f6f6" stroke="#4a5054" stroke-width=".55"/><rect x="0.2" y="6.7" width="5.6" height="2.9" fill="#0a5656"/></svg>
<div class="tr" style="left:42.2px;top:297px;">拉伸体1</div>
<svg class="abs" style="left:28.5px;top:315.8px" width="10" height="10" viewBox="0 0 10 10"><rect x="0.2" y="0.2" width="9.4" height="2.9" fill="#f4f6f6" stroke="#4a5054" stroke-width=".55"/><rect x="0.2" y="0.2" width="5.6" height="2.9" fill="#0a5656"/><rect x="0.2" y="3.45" width="9.4" height="2.9" fill="#f4f6f6" stroke="#4a5054" stroke-width=".55"/><rect x="0.2" y="3.45" width="5.6" height="2.9" fill="#0a5656"/><rect x="0.2" y="6.7" width="9.4" height="2.9" fill="#f4f6f6" stroke="#4a5054" stroke-width=".55"/><rect x="0.2" y="6.7" width="5.6" height="2.9" fill="#0a5656"/></svg>
<div class="tr" style="left:42.2px;top:313px;">拉伸体2</div>
<svg class="abs" style="left:28.5px;top:331.8px" width="10" height="10" viewBox="0 0 10 10"><rect x="0.2" y="0.2" width="9.4" height="2.9" fill="#f4f6f6" stroke="#4a5054" stroke-width=".55"/><rect x="0.2" y="0.2" width="5.6" height="2.9" fill="#0a5656"/><rect x="0.2" y="3.45" width="9.4" height="2.9" fill="#f4f6f6" stroke="#4a5054" stroke-width=".55"/><rect x="0.2" y="3.45" width="5.6" height="2.9" fill="#0a5656"/><rect x="0.2" y="6.7" width="9.4" height="2.9" fill="#f4f6f6" stroke="#4a5054" stroke-width=".55"/><rect x="0.2" y="6.7" width="5.6" height="2.9" fill="#0a5656"/></svg>
<div class="tr" style="left:42.2px;top:329px;">拉伸体3</div>
<div class="ex" style="left:5.3px;top:349.6px;width:6.4px;height:6.4px"></div>
<svg class="abs" style="left:15.9px;top:347.8px" width="10" height="10" viewBox="0 0 10 10"><rect x="0.2" y="0.2" width="9.4" height="2.9" fill="#f4f6f6" stroke="#4a5054" stroke-width=".55"/><rect x="0.2" y="0.2" width="5.6" height="2.9" fill="#0a5656"/><rect x="0.2" y="3.45" width="9.4" height="2.9" fill="#f4f6f6" stroke="#4a5054" stroke-width=".55"/><rect x="0.2" y="3.45" width="5.6" height="2.9" fill="#0a5656"/><rect x="0.2" y="6.7" width="9.4" height="2.9" fill="#f4f6f6" stroke="#4a5054" stroke-width=".55"/><rect x="0.2" y="6.7" width="5.6" height="2.9" fill="#0a5656"/></svg>
<div class="tr" style="left:28.9px;top:345px;">钢筋</div>
<div class="ex" style="left:18.2px;top:365.6px;width:6.4px;height:6.4px"></div>
<svg class="abs" style="left:28.5px;top:363.8px" width="10" height="10" viewBox="0 0 10 10"><rect x="0.2" y="0.2" width="9.4" height="2.9" fill="#f4f6f6" stroke="#4a5054" stroke-width=".55"/><rect x="0.2" y="0.2" width="5.6" height="2.9" fill="#0a5656"/><rect x="0.2" y="3.45" width="9.4" height="2.9" fill="#f4f6f6" stroke="#4a5054" stroke-width=".55"/><rect x="0.2" y="3.45" width="5.6" height="2.9" fill="#0a5656"/><rect x="0.2" y="6.7" width="9.4" height="2.9" fill="#f4f6f6" stroke="#4a5054" stroke-width=".55"/><rect x="0.2" y="6.7" width="5.6" height="2.9" fill="#0a5656"/></svg>
<div class="tr" style="left:42.2px;top:361px;">单根钢筋</div>
<svg class="abs" style="left:41.4px;top:379.8px" width="10" height="10" viewBox="0 0 10 10"><rect x="0.2" y="0.2" width="9.4" height="2.9" fill="#f4f6f6" stroke="#4a5054" stroke-width=".55"/><rect x="0.2" y="0.2" width="5.6" height="2.9" fill="#0a5656"/><rect x="0.2" y="3.45" width="9.4" height="2.9" fill="#f4f6f6" stroke="#4a5054" stroke-width=".55"/><rect x="0.2" y="3.45" width="5.6" height="2.9" fill="#0a5656"/><rect x="0.2" y="6.7" width="9.4" height="2.9" fill="#f4f6f6" stroke="#4a5054" stroke-width=".55"/><rect x="0.2" y="6.7" width="5.6" height="2.9" fill="#0a5656"/></svg>
<div class="tr" style="left:54.9px;top:377px;">单根钢筋2</div>
<div class="ex" style="left:18.2px;top:397.6px;width:6.4px;height:6.4px"></div>
<svg class="abs" style="left:28.5px;top:395.8px" width="10" height="10" viewBox="0 0 10 10"><rect x="0.2" y="0.2" width="9.4" height="2.9" fill="#f4f6f6" stroke="#4a5054" stroke-width=".55"/><rect x="0.2" y="0.2" width="5.6" height="2.9" fill="#0a5656"/><rect x="0.2" y="3.45" width="9.4" height="2.9" fill="#f4f6f6" stroke="#4a5054" stroke-width=".55"/><rect x="0.2" y="3.45" width="5.6" height="2.9" fill="#0a5656"/><rect x="0.2" y="6.7" width="9.4" height="2.9" fill="#f4f6f6" stroke="#4a5054" stroke-width=".55"/><rect x="0.2" y="6.7" width="5.6" height="2.9" fill="#0a5656"/></svg>
<div class="tr" style="left:42.2px;top:393px;">钢筋组</div>
<svg class="abs" style="left:41.4px;top:411.8px" width="10" height="10" viewBox="0 0 10 10"><rect x="0.2" y="0.2" width="9.4" height="2.9" fill="#f4f6f6" stroke="#4a5054" stroke-width=".55"/><rect x="0.2" y="0.2" width="5.6" height="2.9" fill="#0a5656"/><rect x="0.2" y="3.45" width="9.4" height="2.9" fill="#f4f6f6" stroke="#4a5054" stroke-width=".55"/><rect x="0.2" y="3.45" width="5.6" height="2.9" fill="#0a5656"/><rect x="0.2" y="6.7" width="9.4" height="2.9" fill="#f4f6f6" stroke="#4a5054" stroke-width=".55"/><rect x="0.2" y="6.7" width="5.6" height="2.9" fill="#0a5656"/></svg>
<div class="tr" style="left:54.9px;top:409px;">钢筋组1</div>
<svg class="abs" style="left:41.4px;top:427.8px" width="10" height="10" viewBox="0 0 10 10"><rect x="0.2" y="0.2" width="9.4" height="2.9" fill="#0b3f5c" stroke="#12303f" stroke-width=".5"/><rect x="0.4" y="0.5" width="5.6" height="2.3" fill="#0a5050"/><rect x="0.2" y="3.45" width="9.4" height="2.9" fill="#0b3f5c" stroke="#12303f" stroke-width=".5"/><rect x="0.4" y="3.75" width="5.6" height="2.3" fill="#0a5050"/><rect x="0.2" y="6.7" width="9.4" height="2.9" fill="#0b3f5c" stroke="#12303f" stroke-width=".5"/><rect x="0.4" y="7.0" width="5.6" height="2.3" fill="#0a5050"/></svg>
<div class="tr" style="left:54.9px;top:425px;color:#fff;">钢筋组2</div>
<svg class="abs" style="left:41.4px;top:443.8px" width="10" height="10" viewBox="0 0 10 10"><rect x="0.2" y="0.2" width="9.4" height="2.9" fill="#f4f6f6" stroke="#4a5054" stroke-width=".55"/><rect x="0.2" y="0.2" width="5.6" height="2.9" fill="#0a5656"/><rect x="0.2" y="3.45" width="9.4" height="2.9" fill="#f4f6f6" stroke="#4a5054" stroke-width=".55"/><rect x="0.2" y="3.45" width="5.6" height="2.9" fill="#0a5656"/><rect x="0.2" y="6.7" width="9.4" height="2.9" fill="#f4f6f6" stroke="#4a5054" stroke-width=".55"/><rect x="0.2" y="6.7" width="5.6" height="2.9" fill="#0a5656"/></svg>
<div class="tr" style="left:54.9px;top:441px;">钢筋组2-副本1</div>
<div id="status" class="abs"></div>
<div class="abs" style="left:0;top:679px;width:876px;height:6px;background:#fff"></div>
<div class="abs" style="left:4.4px;top:668px;width:1px;height:10px;background:repeating-linear-gradient(#999 0 1px,transparent 1px 2.4px)"></div>
<div class="abs" style="left:11px;top:669.3px;font-size:9px;letter-spacing:-.37px;color:#4a4f58">270010025</div>
<div class="abs" style="left:53px;top:668px;width:.9px;height:10.4px;background:#222"></div>
<svg class="abs" style="left:0;top:663.6px" width="876" height="15.4" viewBox="0 663.6 876 15.4">
<rect x="836.8" y="664.6" width="31.2" height="15" fill="#e9e9e9"/>
<path d="M422.6,676.4 L424.9,673.8 L427.2,676.4" fill="none" stroke="#555" stroke-width=".9"/>
<line x1="438.3" y1="668.4" x2="438.3" y2="679" stroke="#8a8a8a" stroke-width="1" stroke-dasharray="1 1.4"/>
<line x1="504" y1="668.4" x2="504" y2="679" stroke="#8a8a8a" stroke-width="1" stroke-dasharray="1 1.4"/>
<line x1="699.6" y1="668.4" x2="699.6" y2="679" stroke="#8a8a8a" stroke-width="1" stroke-dasharray="1 1.4"/>
<path d="M445.6,679 V670.6 H453.0 L455.6,673 V679" fill="#f4f4f4" stroke="#777" stroke-width="1"/>
<rect x="447.20000000000005" y="674" width="6.4" height="3.6" fill="#cfd2d4" stroke="#888" stroke-width=".7"/>
<circle cx="455.8" cy="678" r="1" fill="#2f9a6a"/>
<line x1="462.3" y1="667.6" x2="462.3" y2="679" stroke="#c9c9c9" stroke-width=".8"/>
<path d="M467.8,679 V670.6 H475.2 L477.8,673 V679" fill="#f4f4f4" stroke="#777" stroke-width="1"/>
<rect x="469.40000000000003" y="674" width="6.4" height="3.6" fill="#cfd2d4" stroke="#888" stroke-width=".7"/>
<circle cx="478.0" cy="678" r="1" fill="#2f9a6a"/>
<path d="M486.4,676.4 L489.6,670.6 H495.4 L493,676.4 Z" fill="#9a9da0" stroke="#666" stroke-width=".8"/><rect x="486.4" y="676.4" width="7" height="2.6" fill="#55585b"/>
<rect x="508.5" y="667.3" width="15.6" height="13" fill="#b9dfd5" stroke="#55b09a" stroke-width="1"/>
<line x1="527.6" y1="667.6" x2="527.6" y2="679" stroke="#c9c9c9" stroke-width=".8"/>
<rect x="531.3" y="667.3" width="15.6" height="13" fill="#b9dfd5" stroke="#55b09a" stroke-width="1"/>
<line x1="550.4" y1="667.6" x2="550.4" y2="679" stroke="#c9c9c9" stroke-width=".8"/>
<rect x="554.4" y="667.3" width="15.6" height="13" fill="#b9dfd5" stroke="#55b09a" stroke-width="1"/>
<line x1="573.5" y1="667.6" x2="573.5" y2="679" stroke="#c9c9c9" stroke-width=".8"/>
<rect x="577.0" y="667.3" width="15.6" height="13" fill="#b9dfd5" stroke="#55b09a" stroke-width="1"/>
<line x1="596.1" y1="667.6" x2="596.1" y2="679" stroke="#c9c9c9" stroke-width=".8"/>
<rect x="600.3" y="667.3" width="15.6" height="13" fill="#b9dfd5" stroke="#55b09a" stroke-width="1"/>
<line x1="619.4" y1="667.6" x2="619.4" y2="679" stroke="#c9c9c9" stroke-width=".8"/>
<rect x="623.1" y="667.3" width="15.6" height="13" fill="#b9dfd5" stroke="#55b09a" stroke-width="1"/>
<g transform="translate(0,-1.4)">
<path d="M511.4,677.6 L514.4,673 H521.6 L518.6,677.6 Z" fill="#dfe3e3" stroke="#44484c" stroke-width="1" stroke-linejoin="round"/><path d="M511.4,677.6 V679 H518.6 V677.6" fill="#dfe3e3" stroke="#44484c" stroke-width="1" stroke-linejoin="round"/>
<path d="M534,676.4 L537.6,671 H545 L541.4,676.4 Z" fill="#dfe3e3" stroke="#44484c" stroke-width="1" stroke-linejoin="round"/><path d="M535,679 L538.4,674 H545.4 L542,679" fill="none" stroke="#44484c" stroke-width="1"/>
<path d="M559.6,679 V672 L561.6,670.6 H565.6 V679" fill="#dfe3e3" stroke="#44484c" stroke-width="1" stroke-linejoin="round"/><path d="M563.4,679 V672.4" stroke="#44484c" stroke-width=".9"/>
<path d="M580,679 V671.6 L581.6,670.4 H590 V679 M580,671.6 H588.4 L590,670.4 M588.4,671.6 V679" fill="#dfe3e3" stroke="#44484c" stroke-width="1" stroke-linejoin="round"/>
<rect x="603" y="670.4" width="9.6" height="9" fill="#cfd6d6" stroke="#44484c" stroke-width="1"/><g fill="#55857a"><rect x="605" y="672.4" width="1.8" height="1.8"/><rect x="608.8" y="672.4" width="1.8" height="1.8"/><rect x="605" y="676" width="1.8" height="1.8"/><rect x="608.8" y="676" width="1.8" height="1.8"/></g>
<rect x="625.8" y="670.4" width="9.6" height="9" fill="#cfd6d6" stroke="#44484c" stroke-width="1"/><g fill="#333"><rect x="627.8" y="672.6" width="2.2" height="2"/><rect x="631.4" y="672.6" width="2.2" height="2"/><rect x="627.8" y="676.2" width="2.2" height="2"/><rect x="631.4" y="676.2" width="2.2" height="2"/></g>
</g>
<line x1="642.8" y1="667.6" x2="642.8" y2="679" stroke="#c9c9c9" stroke-width=".8"/>
<rect x="646.2" y="667.4" width="47" height="13" fill="#fff" stroke="#c4c4c4" stroke-width=".9"/>
<path d="M687,674.4 H690.6 L688.8,676.4 Z" fill="#555"/>
<path d="M706.8,671.6 H717.4" stroke="#5b9fe0" stroke-width="1.6"/><path d="M706.8,676.3 H717.4" stroke="#9ab8d8" stroke-width="1.4"/>
<line x1="723.9" y1="667.6" x2="723.9" y2="679" stroke="#c9c9c9" stroke-width=".8"/>
<path d="M730.6,670.4 H733.8 V675.4 H740 V679 H730.6 Z" fill="#3f8fdc" stroke="#2a6bb0" stroke-width=".6"/><path d="M733.8,670.4 L735,671.4 V675.4 H733.8" fill="#8fc0ee"/>
<line x1="746.2" y1="667.6" x2="746.2" y2="679" stroke="#c9c9c9" stroke-width=".8"/>
<path d="M753.4,677.6 L758.4,670.4 L761.4,671.6 L756.6,678.8 Z" fill="#3f8fdc"/><path d="M757.6,678.6 L762.4,671.6 L763.6,672.4 L759,679" fill="none" stroke="#3aa34a" stroke-width="1.2"/>
<line x1="768.4" y1="667.6" x2="768.4" y2="679" stroke="#c9c9c9" stroke-width=".8"/>
<path d="M777,674.6 V670.4 H786 V674.6 Z" fill="#4a90e0"/><path d="M777,674.6 H786 V676.6 H777 Z" fill="#7a8088"/><path d="M776.4,678.6 H781 " stroke="#666" stroke-width="1.2"/><circle cx="785.2" cy="678" r="1" fill="#3aa34a"/>
<line x1="792.8" y1="667.6" x2="792.8" y2="679" stroke="#c9c9c9" stroke-width=".8"/>
<path d="M799.4,672 L802,669.8 H809.6 L807,672 Z" fill="#e0b040"/><path d="M799.4,672 H807 V675 H799.4 Z" fill="#4a90e0"/><path d="M799.4,675.6 H807 V678.6 H799.4 Z" fill="#5b9fe0"/>
<line x1="815.7" y1="667.6" x2="815.7" y2="679" stroke="#c9c9c9" stroke-width=".8"/>
<path d="M822,674 L826,670.4 H832.4 V673 L828,676.6 H822 Z" fill="#4a90e0"/><path d="M821,677.4 H829" stroke="#666" stroke-width="1.2"/><circle cx="822.4" cy="675.2" r="1.2" fill="#3aa34a"/>
</svg>
<div class="abs" style="left:649.4px;top:671.2px;font-size:8px;color:#333;white-space:nowrap">精细显示</div>

<div id="dclip" class="abs" style="left:4px;top:6px;width:864px;height:673px;overflow:hidden;pointer-events:none">
<div id="dlg" class="abs">
 <div id="dlgtitle" class="abs"></div>
 <div class="lbl" style="left:6.6px;top:6px;color:#9a9a9a">钢筋面排布</div>
 <svg class="abs" style="left:210.4px;top:5.2px" width="9" height="9" viewBox="0 0 9 9"><path d="M1,1 L7.8,7.8 M7.8,1 L1,7.8" stroke="#5a5a5a" stroke-width=".7" fill="none"/></svg>
 <!-- group 1 -->
 <div class="grp" style="left:16.6px;top:38px;width:187.6px;height:37.4px"></div>
 <div class="gl" style="left:21px;top:35.2px">辅助轴线</div>
 <div class="btn def" style="left:64.8px;top:51.6px;width:55px">自动生成</div>
 <div class="btn" style="left:133.2px;top:51.6px;width:55px">线性绘制</div>
 <!-- group 2 -->
 <div class="grp" style="left:16.6px;top:88.8px;width:187.6px;height:75px"></div>
 <div class="gl" style="left:21px;top:85px">交点选择</div>
 <div class="lbl" style="left:64.8px;top:102.1px">排布形式</div>
 <div class="cmb" style="left:133.2px;top:99.3px">矩形排布<svg width="6" height="4" viewBox="0 0 6 4"><path d="M.6,.6 L3,3 L5.4,.6" fill="none" stroke="#444" stroke-width=".8"/></svg></div>
 <div class="lbl" style="left:64.8px;top:122.2px">方向1排布</div>
 <div class="cmb" style="left:133.2px;top:119.2px">满布<svg width="6" height="4" viewBox="0 0 6 4"><path d="M.6,.6 L3,3 L5.4,.6" fill="none" stroke="#444" stroke-width=".8"/></svg></div>
 <div class="lbl" style="left:64.8px;top:142.4px">方向2排布</div>
 <div class="cmb" style="left:133.2px;top:139.5px">满布<svg width="6" height="4" viewBox="0 0 6 4"><path d="M.6,.6 L3,3 L5.4,.6" fill="none" stroke="#444" stroke-width=".8"/></svg></div>
 <!-- group 3 -->
 <div class="grp" style="left:16.6px;top:178.2px;width:187.6px;height:33.2px"></div>
 <div class="gl" style="left:21px;top:174.6px">布置钢筋</div>
 <div class="btn def" style="left:64.8px;top:189.4px;width:55px">选择钢筋</div>
 <div class="abs" style="left:133.4px;top:191.6px;width:8.8px;height:8.8px;border:.9px solid #333;background:#fff"></div>
 <svg class="abs" style="left:134.4px;top:192.8px" width="7" height="7" viewBox="0 0 7 7"><path d="M.9,3.4 L2.7,5.3 L6.1,1.3" fill="none" stroke="#222" stroke-width=".9"/></svg>
 <div class="lbl" style="left:144.4px;top:192.3px">保留钢筋</div>
 <div class="lbl" style="left:40.6px;top:224.3px;width:162px;text-align:center">提示：单选、框选辅助线或交点可增加或减少</div>
 <div class="btn" style="left:65.8px;top:242.2px;width:49.6px;height:13.8px;border-color:#c2c2c2">生成排列</div>
 <div class="btn" style="left:138.2px;top:242.2px;width:49.6px;height:13.8px;border-color:#c2c2c2">取消</div>
</div>
</div>

</body>
</html>
